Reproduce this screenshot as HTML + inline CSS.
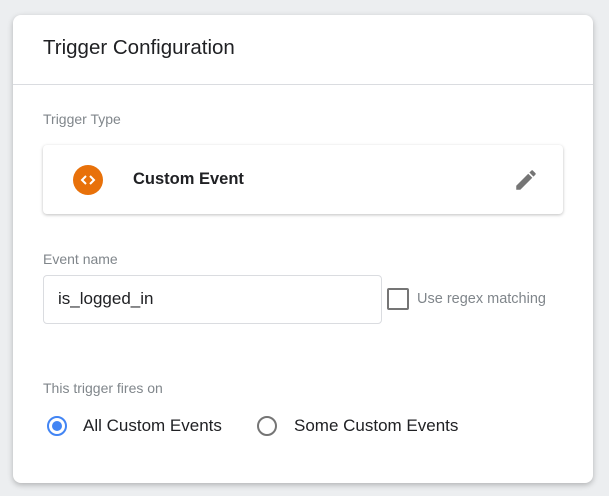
<!DOCTYPE html>
<html><head><style>
body{margin:0;width:609px;height:496px;background:#eceef0;font-family:"Liberation Sans",sans-serif;position:relative;overflow:hidden}
.card{position:absolute;left:13px;top:15px;width:580px;height:468px;background:#fff;border-radius:8px;box-shadow:0 2px 6px rgba(0,0,0,.25)}
.abs{position:absolute}
.t{left:30px;top:21px;font-size:20.5px;color:#202124}
.div{left:0;right:0;top:69px;height:1px;background:#dadce0}
.lbl{font-size:14px;color:#80868b}
.inner{left:30px;top:130px;width:520px;height:69px;border-radius:4px;box-shadow:0 1px 3px rgba(0,0,0,.25)}
.inp{left:30px;top:260px;width:337px;height:47px;border:1px solid #dadce0;border-radius:4px}
.cb{left:374px;top:273px;width:18px;height:18px;border:2px solid #757575;border-radius:2px}
.radio{width:20px;height:20px;border-radius:50%;box-sizing:border-box}
.rt{font-size:17px;color:#202124}
</style></head><body>
<div class="card">
<div class="abs t">Trigger Configuration</div>
<div class="abs div"></div>
<div class="abs lbl" style="left:30px;top:96px">Trigger Type</div>
<div class="abs inner">
 <svg class="abs" style="left:30px;top:20px" width="30" height="30" viewBox="0 0 30 30"><circle cx="15" cy="15" r="15" fill="#e8710a"/><path d="M13 11l-4 4 4 4M17 11l4 4-4 4" stroke="#fff" stroke-width="2" fill="none"/></svg>
 <div class="abs" style="left:90px;top:25px;font-size:16.5px;font-weight:bold;color:#202124">Custom Event</div>
 <svg class="abs" style="left:470px;top:22px" width="26" height="26" viewBox="0 0 24 24"><path fill="#757575" d="M3 17.25V21h3.75L17.81 9.94l-3.75-3.75L3 17.25zM20.71 7.04a1 1 0 000-1.41l-2.34-2.34a1 1 0 00-1.41 0l-1.83 1.83 3.75 3.75 1.83-1.83z"/></svg>
</div>
<div class="abs lbl" style="left:30px;top:236px">Event name</div>
<div class="abs inp"><div class="abs" style="left:14px;top:13px;font-size:17px;color:#202124">is_logged_in</div></div>
<div class="abs cb"></div>
<div class="abs lbl" style="left:404px;top:276px;font-size:14.5px">Use regex matching</div>
<div class="abs lbl" style="left:30px;top:365px">This trigger fires on</div>
<div class="abs radio" style="left:34px;top:401px;border:2px solid #4285f4"><div class="abs" style="left:3px;top:3px;width:10px;height:10px;border-radius:50%;background:#4285f4"></div></div>
<div class="abs rt" style="left:70px;top:401px">All Custom Events</div>
<div class="abs radio" style="left:244px;top:401px;border:2px solid #757575"></div>
<div class="abs rt" style="left:281px;top:401px">Some Custom Events</div>
</div>
</body></html>
